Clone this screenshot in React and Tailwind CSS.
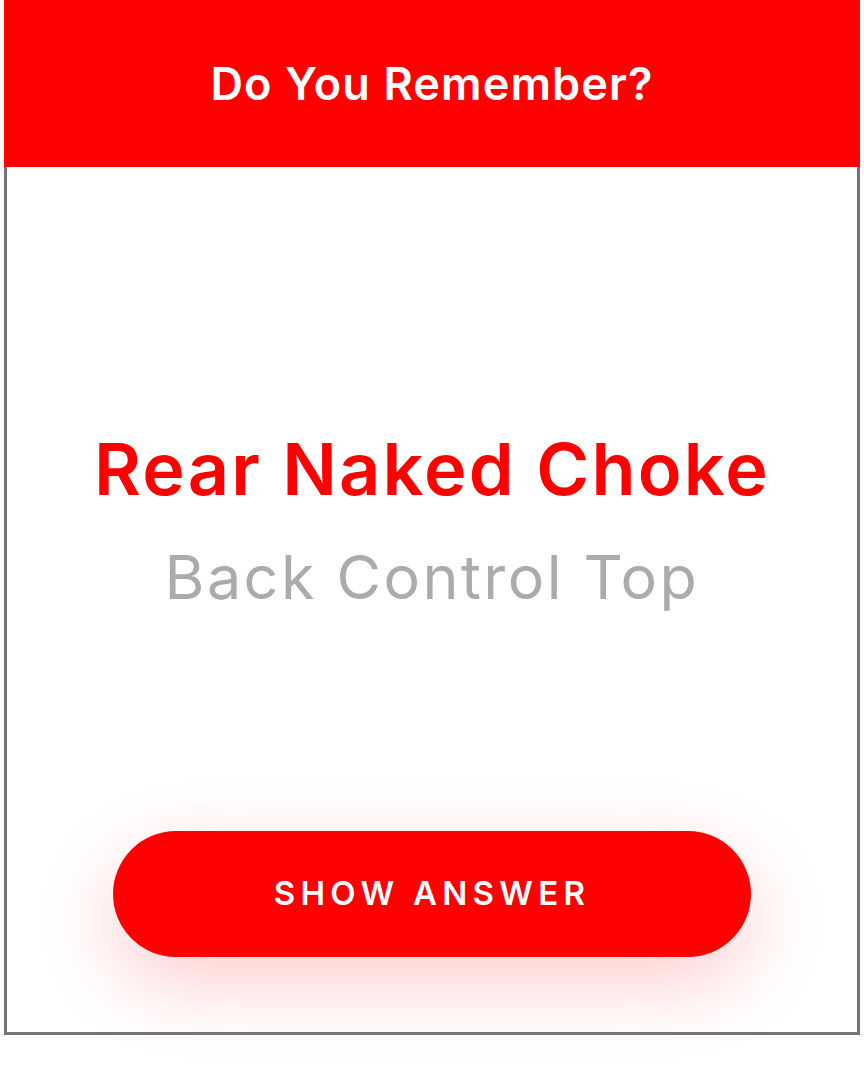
export default function App() {
  return (
    <div className="min-h-screen bg-white" style={{ fontFamily: 'Inter, "Noto Sans", sans-serif' }}>
      <div className="ml-[4px] w-[856px]">
        {/* Header */}
        <div className="h-[167px] bg-[#ff0000] flex items-center justify-center">
          <h1 className="text-white font-semibold text-[45px] leading-none tracking-[0.025em]">Do You Remember?</h1>
        </div>

        {/* Card body */}
        <div className="h-[868px] border-x-[3px] border-b-[3px] border-[#757575] flex flex-col items-center">
          <div className="mt-[266px] text-[#ff0000] font-semibold text-[72px] leading-none tracking-[0.03em]">Rear Naked Choke</div>
          <div className="mt-[42px] text-[#ababab] font-normal text-[61px] leading-none tracking-[0.04em]">Back Control Top</div>
          <button className="mt-auto mb-[75px] w-[638px] h-[126px] rounded-full bg-[#ff0000] text-white font-semibold text-[33px] tracking-[0.16em] shadow-[0_26px_80px_rgba(255,0,0,0.2)]">
            SHOW ANSWER
          </button>
        </div>
      </div>
    </div>
  );
}
